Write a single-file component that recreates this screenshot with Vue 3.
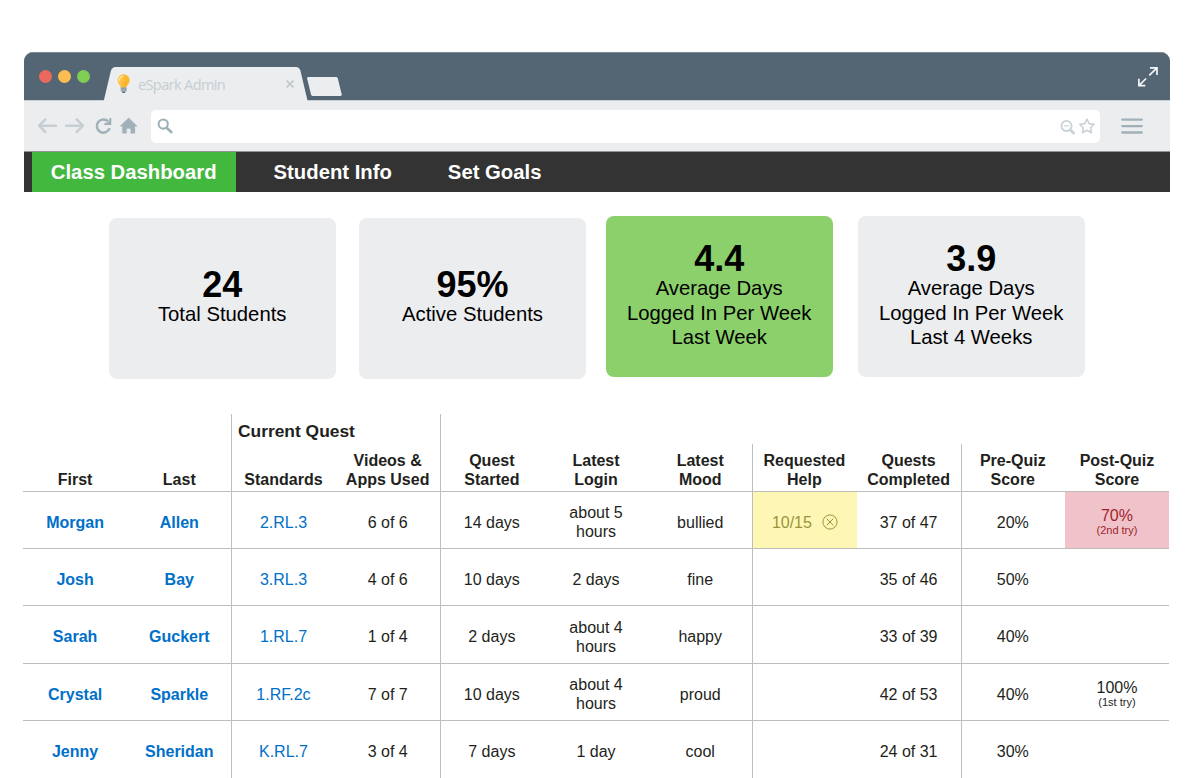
<script setup>
const stats = [
  { value: '24', lines: ['Total Students'], kind: 'low' },
  { value: '95%', lines: ['Active Students'], kind: 'low' },
  { value: '4.4', lines: ['Average Days', 'Logged In Per Week', 'Last Week'], kind: 'good' },
  { value: '3.9', lines: ['Average Days', 'Logged In Per Week', 'Last 4 Weeks'], kind: 'last' },
]

const headers = [
  ['First'], ['Last'], ['Standards'], ['Videos &', 'Apps Used'], ['Quest', 'Started'],
  ['Latest', 'Login'], ['Latest', 'Mood'], ['Requested', 'Help'], ['Quests', 'Completed'],
  ['Pre-Quiz', 'Score'], ['Post-Quiz', 'Score'],
]
const divided = [2, 4, 7, 9]

const students = [
  { first: 'Morgan', last: 'Allen', standard: '2.RL.3', used: '6 of 6', started: '14 days', login: ['about 5', 'hours'], mood: 'bullied', help: '10/15', completed: '37 of 47', pre: '20%', post: '70%', attempt: '(2nd try)', alert: true },
  { first: 'Josh', last: 'Bay', standard: '3.RL.3', used: '4 of 6', started: '10 days', login: ['2 days'], mood: 'fine', completed: '35 of 46', pre: '50%' },
  { first: 'Sarah', last: 'Guckert', standard: '1.RL.7', used: '1 of 4', started: '2 days', login: ['about 4', 'hours'], mood: 'happy', completed: '33 of 39', pre: '40%' },
  { first: 'Crystal', last: 'Sparkle', standard: '1.RF.2c', used: '7 of 7', started: '10 days', login: ['about 4', 'hours'], mood: 'proud', completed: '42 of 53', pre: '40%', post: '100%', attempt: '(1st try)' },
  { first: 'Jenny', last: 'Sheridan', standard: 'K.RL.7', used: '3 of 4', started: '7 days', login: ['1 day'], mood: 'cool', completed: '24 of 31', pre: '30%' },
]
</script>

<template>
  <div class="page">
    <div class="window">
      <header class="titlebar">
        <div class="lights"><i class="red"></i><i class="amber"></i><i class="green"></i></div>
        <div class="tab">
          <svg class="tab-shape" width="240" height="35" viewBox="103 66 240 35">
            <path d="M103.7 101L110.7 71.5Q111.8 67 115.5 67H296Q299.3 67 300.4 70.5L307.6 101Z" fill="#ecedef" />
            <path d="M308.3 77H335.8Q337.4 77 337.8 78.4L341.7 94.2Q342 95.9 340.4 95.9H313.2Q311.5 95.9 311 94.4L307.1 78.6Q306.8 77 308.3 77Z" fill="#ecedef" />
          </svg>
          <svg class="bulb" width="14" height="20" viewBox="117 74.5 14 20">
            <path d="M123.7 75.1C120.2 75.1 117.8 77.7 117.8 80.8C117.8 84.3 120.5 85.2 120.8 88.1H126.6C126.9 85.2 129.6 84.3 129.6 80.8C129.6 77.7 127.2 75.1 123.7 75.1Z" fill="#fdb62f" />
            <path d="M123.7 75.1C120.2 75.1 117.8 77.7 117.8 80.8C117.8 84.3 120.5 85.2 120.8 88.1H123.7Z" fill="#fdc544" />
            <path d="M119.4 80.8C119.4 78.6 121 76.8 123.1 76.8" fill="none" stroke="#ffe7ad" stroke-width="1.3" stroke-linecap="round" />
            <path d="M122 82.2L123.1 88M125.4 82.2L124.3 88" fill="none" stroke="#f2a32c" stroke-width=".5" />
            <path d="M120.8 88.1H126.6V91.2L125.6 92.3H121.8L120.8 91.2Z" fill="#84919a" />
            <path d="M120.8 89.6H126.6M121 91.2H126.4" stroke="#c3cace" stroke-width=".6" />
            <path d="M122.3 92.3H125.1V93.5H122.3Z" fill="#5d6a72" />
          </svg>
          <span class="tab-title">eSpark Admin</span>
          <svg class="close" width="10" height="10" viewBox="0 0 10 10"><path d="M1.6 1.6L8.4 8.4M8.4 1.6L1.6 8.4" stroke="#c3ccd0" stroke-width="2" /></svg>
        </div>
        <svg class="expand" width="22" height="22" viewBox="1138 66 22 22">
          <g fill="none" stroke="#f4f5f6" stroke-width="1.7">
            <path d="M1151 67.9H1158V75M1157.7 68.2L1150.3 75.3M1139.9 78.7V85.6H1146.3M1140.2 85.3L1147.1 78.5" />
          </g>
        </svg>
      </header>

      <div class="toolbar">
        <svg class="back" width="22" height="22" viewBox="37 115 22 22"><path d="M39.5 125.7H56M45.3 119.4L39 125.7L45.3 132" fill="none" stroke="#c6cfd3" stroke-width="2.5" stroke-linecap="round" stroke-linejoin="round" /></svg>
        <svg class="forward" width="22" height="22" viewBox="64 115 22 22"><path d="M66.2 125.7H82.5M76.7 119.4L83 125.7L76.7 132" fill="none" stroke="#c6cfd3" stroke-width="2.5" stroke-linecap="round" stroke-linejoin="round" /></svg>
        <svg class="reload" width="20" height="22" viewBox="94 115 20 22"><path d="M108.2 121.4A6.6 6.6 0 1 0 109.7 128.2" fill="none" stroke="#a1b1b9" stroke-width="2.5" /><path d="M111.3 118V125H104.4V122.9L107.6 122.6L109.2 121V118Z" fill="#a1b1b9" /></svg>
        <svg class="home" width="22" height="22" viewBox="118 115 22 22"><path d="M128.7 117.8L137.3 126.2H134.9V133.3H130.7V128.4H126.6V133.3H122.4V126.2H120Z" fill="#a1b1b9" stroke="#a1b1b9" stroke-width=".3" /></svg>
        <div class="address">
          <svg width="17" height="18" viewBox="157 117 17 18"><circle cx="163.2" cy="124.1" r="4.6" fill="none" stroke="#a1b1b9" stroke-width="2.1" /><path d="M166.9 127.9L171.2 132.1" stroke="#a1b1b9" stroke-width="2.8" stroke-linecap="round" /></svg>
          <svg class="bookmark" width="38" height="20" viewBox="1059 115.5 38 20">
            <g fill="none" stroke="#c9d2d6">
              <circle cx="1066.5" cy="125.4" r="5.1" stroke-width="1.8" />
              <path d="M1064.2 125.4H1068.8" stroke-width="1.3" />
              <path d="M1070.5 129.4L1073.6 132.4" stroke-width="2.8" stroke-linecap="round" />
              <path d="M1086.9 118.5L1089.1 123.1L1094.1 123.8L1090.5 127.3L1091.4 132.2L1086.9 129.8L1082.4 132.2L1083.3 127.3L1079.7 123.8L1084.7 123.1Z" stroke-width="1.6" stroke-linejoin="round" />
            </g>
          </svg>
        </div>
        <svg class="menu" width="24" height="20" viewBox="1120.5 115.5 24 20"><path d="M1122.8 119.1H1142.3M1122.8 125.6H1142.3M1122.8 132H1142.3" stroke="#a1b1b9" stroke-width="2.3" stroke-linecap="round" /></svg>
      </div>

      <nav class="nav">
        <a class="current">Class Dashboard</a>
        <a class="info">Student Info</a>
        <a class="goals">Set Goals</a>
      </nav>
    </div>

    <section class="stats">
      <article v-for="s in stats" :key="s.value" class="card" :class="s.kind">
        <strong>{{ s.value }}</strong>
        <span v-for="l in s.lines" :key="l">{{ l }}</span>
      </article>
    </section>

    <section class="table">
      <div class="row group"><div class="group-name">Current Quest</div></div>
      <div class="row head">
        <div v-for="(h, i) in headers" :key="i" class="cell" :class="{ divided: divided.includes(i) }">
          <span v-for="l in h" :key="l">{{ l }}</span>
        </div>
      </div>
      <div v-for="s in students" :key="s.first" class="row body">
        <div class="cell name">{{ s.first }}</div>
        <div class="cell name">{{ s.last }}</div>
        <div class="cell divided link">{{ s.standard }}</div>
        <div class="cell">{{ s.used }}</div>
        <div class="cell divided">{{ s.started }}</div>
        <div class="cell"><span v-for="l in s.login" :key="l">{{ l }}</span></div>
        <div class="cell">{{ s.mood }}</div>
        <div class="cell divided" :class="{ help: s.help }">
          <template v-if="s.help">
            <span>{{ s.help }}</span>
            <svg width="16" height="16" viewBox="0 0 16 16"><g fill="none" stroke="#9a933d" stroke-width="1"><circle cx="8" cy="8" r="7.1" /><path d="M4.7 4.7L11.3 11.3M11.3 4.7L4.7 11.3" /></g></svg>
          </template>
        </div>
        <div class="cell">{{ s.completed }}</div>
        <div class="cell divided">{{ s.pre }}</div>
        <div class="cell post" :class="{ alert: s.alert }">
          <template v-if="s.post"><span>{{ s.post }}</span><small>{{ s.attempt }}</small></template>
        </div>
      </div>
    </section>
  </div>
</template>

<style>
body { margin: 0; background: #fff; overflow: hidden; }
</style>

<style scoped>
.page { box-sizing: border-box; width: 1200px; height: 778px; padding: 51.5px 0 0 23px; overflow: hidden; background: #fff; font-family: "Liberation Sans", Arial, sans-serif; color: #231f20; }
svg { display: block; flex: none; }
.window { width: 1146.4px; margin-left: .6px; border-radius: 9px 9px 0 0; overflow: hidden; }
.titlebar { box-sizing: border-box; height: 48.5px; display: flex; align-items: flex-start; background: #546673; border-top: 1px solid #7d8b95; }
.lights { display: flex; gap: 6px; margin: 17.7px 0 0 15.2px; }
.lights i { width: 13px; height: 13px; border-radius: 50%; }
.red { background: #e9695c; }
.amber { background: #fdbc52; }
.green { background: #7fcd55; }
.tab { position: relative; display: flex; align-items: center; box-sizing: border-box; width: 240px; height: 35px; margin: 13.5px 0 0 13.2px; padding-left: 14px; }
.tab-shape { position: absolute; left: 0; top: 0; }
.bulb { position: relative; margin-top: 1px; }
.tab-title { position: relative; width: 149px; margin-left: 7px; font: 14.6px "Open Sans", sans-serif; letter-spacing: -.65px; line-height: 20px; color: #c5ced2; white-space: nowrap; }
.close { position: relative; margin: 0 0 0 -2px; }
.expand { margin: 13px 10.7px 0 auto; }
.toolbar { box-sizing: border-box; height: 51px; display: flex; align-items: center; background: #ecedef; border-top: 1px solid #c5ced2; padding-left: 13.4px; }
.forward { margin-left: 5px; }
.reload { margin-left: 8px; }
.home { margin-left: 4px; }
.address { box-sizing: border-box; display: flex; align-items: center; width: 949px; height: 33px; margin-left: 11px; padding: 0 3px 0 6px; border-radius: 5px; background: #fff; }
.bookmark { margin-left: auto; }
.menu { margin-left: 20.5px; }
.nav { box-sizing: border-box; height: 41px; display: flex; border-top: 1px solid #909293; background: #333; padding-left: 8.2px; color: #fff; font-weight: 700; font-size: 20.3px; line-height: 41px; white-space: nowrap; }
.current { width: 203.8px; text-align: center; background: #43b83f; }
.info { margin-left: 38px; }
.goals { margin-left: 56px; }
.stats { display: flex; align-items: flex-start; padding: 23.7px 0 0 85.7px; }
.card { box-sizing: border-box; width: 227px; height: 161.5px; border-radius: 8px; background: #ecedef; display: flex; flex-direction: column; align-items: center; color: #000; font-size: 20.3px; line-height: 24.4px; }
.card strong { font-size: 36px; line-height: 36px; margin: 1px 0 -1px; }
.card.low { margin: 2px 23.3px 0 0; padding-top: 48.5px; }
.card.low + .low { margin-right: 19.7px; }
.card.good { background: #8bd06b; margin-right: 25px; padding-top: 24.7px; }
.card.last { padding-top: 24.7px; }
.table { margin-top: 34.8px; font-size: 16px; line-height: 19.2px; }
.row { display: grid; grid-template-columns: repeat(11, 104.2px); width: 1146.2px; }
.group { height: 29.7px; }
.group-name { grid-column: 3 / span 2; border: solid #bcbec0; border-width: 0 1px; margin-right: -1px; padding-left: 5.6px; font-weight: 700; font-size: 17.4px; line-height: 34px; }
.cell { box-sizing: border-box; display: flex; flex-direction: column; align-items: center; justify-content: center; white-space: nowrap; }
.divided { border-left: 1px solid #bcbec0; padding-right: 1px; }
.head { height: 48px; font-weight: 700; box-sizing: border-box; border-bottom: 1px solid #bcbec0; }
.head .cell { justify-content: flex-end; padding-bottom: 1.7px; }
.body { box-sizing: border-box; height: 57.4px; border-bottom: 1px solid #bcbec0; }
.body:last-child { border-bottom-color: transparent; }
.body .cell { padding-top: 4.6px; }
.name { font-weight: 700; color: #0070c9; }
.link { color: #0070c9; }
.body .help { flex-direction: row; gap: 10px; background: #fef6b5; color: #9a933d; padding-right: 0; }
.body .post { padding-top: 3px; }
.post small { font-size: 11px; line-height: 11px; margin-bottom: 1px; }
.alert { background: #efc3c9; color: #a01f2f; }
</style>
